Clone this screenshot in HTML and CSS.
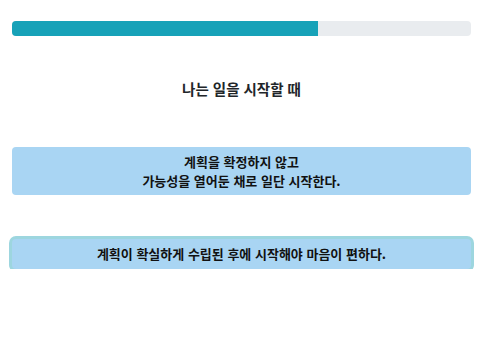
FILE: index.html
```html
<!DOCTYPE html>
<html lang="ko">

<head>
    <meta charset="UTF-8">
    <meta name="viewport" content="width=device-width, initial-scale=1.0">
    <title>성향 테스트</title>
    <link rel="stylesheet" href="styles.css">
</head>

<body>
    <div class="container">
        <div class="progress">
            <div class="progress-bar" style="width: 66.7%"></div>
        </div>

        <h2 class="question">나는 일을 시작할 때</h2>

        <div class="answers">
            <button class="answer">계획을 확정하지 않고<br>가능성을 열어둔 채로 일단 시작한다.</button>
            <button class="answer selected">계획이 확실하게 수립된 후에 시작해야 마음이 편하다.</button>
        </div>
    </div>
</body>

</html>
```

FILE: styles.css
```css
body {
    font-family: "Noto Sans CJK KR", "Noto Sans", sans-serif;
    margin: 0;
    padding: 0;
    background-color: #fff;
    color: #212529;
}

.container {
    padding: 21px 16px 0 12px;
}

.progress {
    height: 15px;
    background-color: #e9ecef;
    border-radius: 4px;
    overflow: hidden;
}

.progress-bar {
    height: 100%;
    background-color: #17a2b8;
}

.question {
    margin: 43px 0 0;
    font-size: 14.5px;
    font-weight: 700;
    line-height: 20px;
    text-align: center;
}

.answers {
    display: flex;
    flex-direction: column;
    gap: 44px;
    margin-top: 48px;
}

.answer {
    display: block;
    width: 100%;
    padding: 5px 10px;
    font-family: inherit;
    font-size: 13px;
    font-weight: 700;
    line-height: 19px;
    color: #111;
    text-align: center;
    background-color: #a9d5f3;
    border: none;
    border-radius: 4px;
}

.answer.selected {
    padding: 5px 10px 6px;
    box-shadow: 0 0 0 3px #9dd6df;
}
```
